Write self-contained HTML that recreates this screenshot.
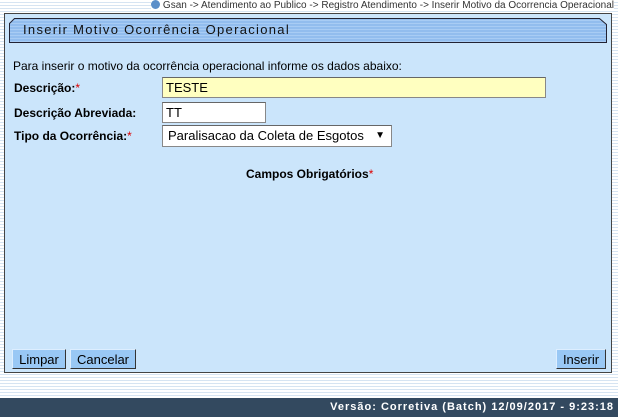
<!DOCTYPE html>
<html><head><meta charset="utf-8"><style>
*{margin:0;padding:0;box-sizing:border-box}
body{width:618px;height:417px;overflow:hidden;font-family:"Liberation Sans",Arial,sans-serif;font-size:12px;color:#000;
background:repeating-linear-gradient(#fff 0,#fff 2px,#d6e4f2 2px,#d6e4f2 3px);position:relative}
.crumb{position:absolute;right:4px;top:0;font-size:10px;color:#333;white-space:nowrap;line-height:11px;background:#fff}
.crumb i{display:inline-block;width:9px;height:9px;border-radius:50%;background:#5b8fc9;vertical-align:-1px;margin-right:3px}
.panel{position:absolute;left:4px;top:13px;width:608px;height:360px;background:#cbe5fb;border:1px solid #444}
.hdr{position:absolute;left:4px;top:4px;width:598px;height:25px}
.hdr svg{position:absolute;left:0;top:0}
.hdr span{position:absolute;left:14px;top:4px;font-size:13px;letter-spacing:1.3px;color:#111;white-space:nowrap}
.t{position:absolute;white-space:nowrap}
b{font-weight:bold}
.r{color:#d00}
.inp{position:absolute;border:1px solid #888;border-top-color:#666;background:#fff;font-size:13px;padding:2px 0 0 3px}
.btn{position:absolute;top:335px;height:20px;background:#99c8f5;border:1px solid #333;border-top-color:#ddeeff;border-left-color:#ddeeff;font-size:13px;padding:2px 0 0;text-align:center}
.foot{position:absolute;left:0;top:398px;width:618px;height:19px;background:#33495f;color:#fff;font-weight:bold;font-size:11px;letter-spacing:1px;text-align:right;padding:3px 4px 0 0}
</style></head><body>
<div class="crumb"><i></i>Gsan -&gt; Atendimento ao Publico -&gt; Registro Atendimento -&gt; Inserir Motivo da Ocorrencia Operacional</div>
<div class="panel">
<div class="hdr"><svg width="598" height="25">
<defs><pattern id="p" width="4" height="3" patternUnits="userSpaceOnUse"><rect width="4" height="3" fill="#92bdee"/><rect y="2" width="4" height="1" fill="#a8ccf4"/></pattern></defs>
<polygon points="5.5,0.5 590.5,0.5 597.5,6.5 597.5,24.5 0.5,24.5 0.5,5.5" fill="url(#p)" stroke="#223" stroke-width="1"/>
</svg><span>Inserir Motivo Ocorrência Operacional</span></div>
<div class="t" style="left:8px;top:45px">Para inserir o motivo da ocorrência operacional informe os dados abaixo:</div>
<div class="t" style="left:9px;top:67px"><b>Descrição:</b><span class="r">*</span></div>
<div class="inp" style="left:157px;top:63px;width:384px;height:21px;background:#ffffc0">TESTE</div>
<div class="t" style="left:9px;top:92px"><b>Descrição Abreviada:</b></div>
<div class="inp" style="left:157px;top:88px;width:104px;height:21px">TT</div>
<div class="t" style="left:9px;top:115px"><b>Tipo da Ocorrência:</b><span class="r">*</span></div>
<div class="inp" style="left:157px;top:111px;width:230px;height:22px;padding-left:5px">Paralisacao da Coleta de Esgotos<span style="position:absolute;right:6px;top:4px;font-size:10px">▼</span></div>
<div class="t" style="left:241px;top:153px"><b>Campos Obrigatórios</b><span class="r">*</span></div>
<div class="btn" style="left:7px;width:54px">Limpar</div>
<div class="btn" style="left:65px;width:66px">Cancelar</div>
<div class="btn" style="left:551px;width:50px">Inserir</div>
</div>
<div class="foot">Versão: Corretiva (Batch) 12/09/2017 - 9:23:18</div>
</body></html>
